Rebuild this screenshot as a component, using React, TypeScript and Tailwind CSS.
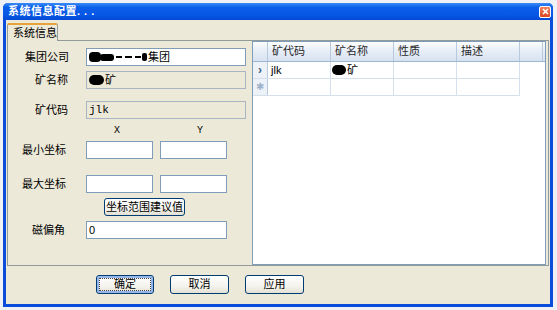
import clsx from "clsx"
import { FC, ReactNode } from "react"

const font = "font-['Liberation_Sans','Noto_Sans_CJK_SC',sans-serif]"

// black redaction marks over the original names
const Blot:FC<{ w: number, dashed?: boolean }> = ({ w, dashed }) => {
   if(dashed){
      return (
         <span className="inline-flex items-center h-[12px] mr-[1px]">
            <span className="w-[12px] h-[10px] bg-black rounded-[4px]" />
            <span className="w-[14px] h-[7px] bg-black rounded-[3px] -ml-[1px]" />
            <span className="w-[6px] h-[2px] bg-black ml-[2px]" />
            <span className="w-[7px] h-[2px] bg-black ml-[3px]" />
            <span className="w-[6px] h-[2px] bg-black ml-[3px]" />
            <span className="w-[5px] h-[8px] bg-black rounded-[2px] ml-[1px]" />
         </span>
      )
   }
   return (
      <span
         className="inline-block h-[10px] bg-black rounded-full mr-[1px]"
         style={{ width: w }}
      />
   )
}

interface FieldProps {
   label: string
   pl: number
   children: ReactNode
}
const Field:FC<FieldProps> = ({ label, pl, children }) => (
   <div className="flex items-center h-[18px]">
      <span className="w-[78px] shrink-0" style={{ paddingLeft: pl }}>
         {label}
      </span>
      {children}
   </div>
)

const TextBox:FC<{ w: number, disabled?: boolean, mono?: boolean, children?: ReactNode }> = ({
   w,
   disabled,
   mono,
   children
}) => (
   <div
      className={clsx(
         "h-[18px] border flex items-center px-[2px] overflow-hidden whitespace-nowrap",
         disabled
            ? "bg-[#ece9d8] border-[#a9b5c2]"
            : "bg-white border-[#7f9db9]",
         mono && "font-['Liberation_Mono',monospace] text-[11px]"
      )}
      style={{ width: w }}
   >
      {children}
   </div>
)

const XpButton:FC<{ children: ReactNode, focused?: boolean, w: number, h?: number }> = ({
   children,
   focused,
   w,
   h = 19
}) => (
   <button
      type="button"
      className={clsx(
         "relative border border-[#003c74] rounded-[3px] text-[11px] text-black flex items-center justify-center",
         "bg-[linear-gradient(to_bottom,#ffffff,#f4f3ee_60%,#e3e0d3)]",
         focused && "shadow-[inset_0_0_0_2px_#97b7ea]"
      )}
      style={{ width: w, height: h }}
   >
      {focused && (
         <span className="absolute inset-[2px] border border-dotted border-[#444]" />
      )}
      {children}
   </button>
)

const columns = ["矿代码", "矿名称", "性质", "描述"]

const Grid:FC = () => (
   <div className="w-[294px] h-[224px] border border-[#7f9db9] bg-white flex flex-col">
      <div className="flex h-[20px] shrink-0 border-b border-[#9eb6ce] bg-[linear-gradient(to_bottom,#fbfcfe,#e6edf7_50%,#d7e2f1)]">
         <div className="w-[15px] border-r border-[#b8c9dd]" />
         {columns.map(col => (
            <div
               key={col}
               className="w-[63px] border-r border-[#b8c9dd] pl-[4px] flex items-center text-[#2a2a2a]"
            >
               {col}
            </div>
         ))}
         <div className="flex-1 border-r border-[#b8c9dd] mr-[2px]" />
      </div>
      <div className="flex h-[17px] border-b border-[#d6e0ec] w-[267px]">
         <div className="w-[15px] border-r border-[#b8c9dd] bg-[#edf2f9] flex items-center justify-center text-[#3e5f8a] text-[12px] font-bold leading-none">
            ›
         </div>
         <div className="w-[63px] border-r border-[#d6e0ec] pl-[3px] flex items-center">jlk</div>
         <div className="w-[63px] border-r border-[#d6e0ec] pl-[1px] flex items-center">
            <Blot w={14} />矿
         </div>
         <div className="w-[63px] border-r border-[#d6e0ec]" />
         <div className="w-[63px] border-r border-[#d6e0ec]" />
      </div>
      <div className="flex h-[17px] border-b border-[#d6e0ec] w-[267px]">
         <div className="w-[15px] border-r border-[#b8c9dd] bg-[#edf2f9] flex items-center justify-center text-[#9fb3cc] text-[10px] leading-none">
            ✱
         </div>
         <div className="w-[63px] border-r border-[#d6e0ec]" />
         <div className="w-[63px] border-r border-[#d6e0ec]" />
         <div className="w-[63px] border-r border-[#d6e0ec]" />
         <div className="w-[63px] border-r border-[#d6e0ec]" />
      </div>
   </div>
)

const App:FC = () => {
   return (
      <div className={clsx("w-[557px] h-[310px] bg-[#eef1f5] pt-[3px] pl-[3px] text-[11px] text-black", font)}>
         <div className="w-[550px] h-[304px] flex flex-col bg-[#0a4ddb] rounded-t-[5px] overflow-hidden">
            {/* title bar */}
            <div className="h-[17px] shrink-0 flex items-center pl-[5px] pr-[2px] bg-[linear-gradient(to_bottom,#3c8cf6,#0a5fe9_25%,#0556e4_75%,#0349d2)]">
               <span className="text-white font-bold text-[11px] leading-none tracking-[0.5px]">
                  系统信息配置. . .
               </span>
               <div className="ml-auto w-[12px] h-[12px] rounded-[2px] border border-white bg-[linear-gradient(to_bottom,#f0825c,#d8461f)] flex items-center justify-center">
                  <svg width="7" height="7" viewBox="0 0 7 7">
                     <path d="M1 1 L6 6 M6 1 L1 6" stroke="white" strokeWidth="1.6" />
                  </svg>
               </div>
            </div>
            {/* client */}
            <div className="flex-1 mx-[3px] mb-[3px] bg-[#ece9d8] flex flex-col">
               <div className="h-[20px] shrink-0 flex items-end pl-[1px]">
                  <div className="w-[51px] h-[18px] -mb-[1px] relative z-10 bg-[#ece9d8] border-x border-[#919b9c] border-t-[2px] border-t-[#e7a23a] rounded-t-[2px] pl-[5px] flex items-center">
                     系统信息
                  </div>
               </div>
               <div className="mx-[1px] h-[226px] shrink-0 border border-[#919b9c] flex">
                  <div className="w-[244px] flex flex-col">
                     <div className="mt-[7px]">
                        <Field label="集团公司" pl={17}>
                           <TextBox w={160}>
                              <Blot w={0} dashed />集团
                           </TextBox>
                        </Field>
                     </div>
                     <div className="mt-[5px]">
                        <Field label="矿名称" pl={27}>
                           <TextBox w={160} disabled>
                              <Blot w={15} />矿
                           </TextBox>
                        </Field>
                     </div>
                     <div className="mt-[12px]">
                        <Field label="矿代码" pl={27}>
                           <TextBox w={160} disabled mono>jlk</TextBox>
                        </Field>
                     </div>
                     <div className="h-[22px] flex items-center font-['Liberation_Mono',monospace] text-[10px]">
                        <span className="ml-[106px]">X</span>
                        <span className="ml-[77px]">Y</span>
                     </div>
                     <Field label="最小坐标" pl={14}>
                        <TextBox w={67} />
                        <div className="w-[7px]" />
                        <TextBox w={67} />
                     </Field>
                     <div className="mt-[16px]">
                        <Field label="最大坐标" pl={14}>
                           <TextBox w={67} />
                           <div className="w-[7px]" />
                           <TextBox w={67} />
                        </Field>
                     </div>
                     <div className="mt-[5px] ml-[96px]">
                        <XpButton w={81} h={18}>坐标范围建议值</XpButton>
                     </div>
                     <div className="mt-[5px]">
                        <Field label="磁偏角" pl={24}>
                           <TextBox w={141}>0</TextBox>
                        </Field>
                     </div>
                  </div>
                  <Grid />
               </div>
               <div className="flex-1 flex items-center pl-[90px] gap-[16px] pb-[1px]">
                  <XpButton w={58} focused>确定</XpButton>
                  <XpButton w={59}>取消</XpButton>
                  <XpButton w={59}>应用</XpButton>
               </div>
            </div>
         </div>
      </div>
   )
}
export default App
